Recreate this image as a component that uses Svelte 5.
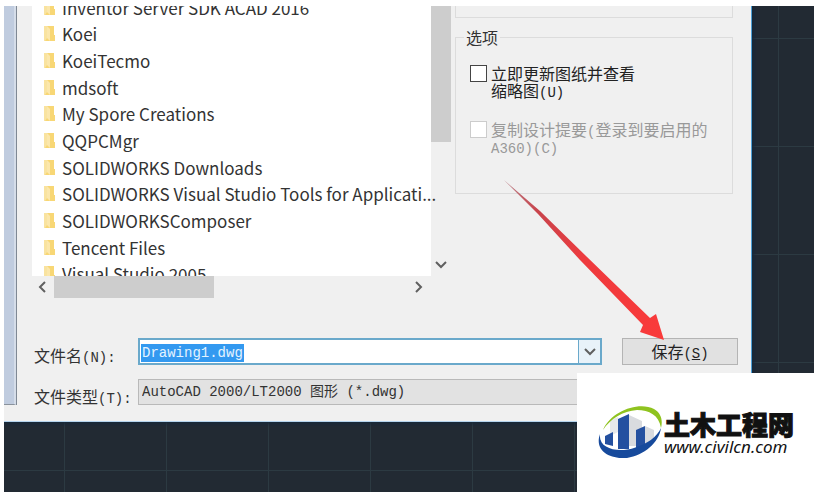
<script lang="ts">
    const folders = [
        'Inventor Server SDK ACAD 2016',
        'Koei',
        'KoeiTecmo',
        'mdsoft',
        'My Spore Creations',
        'QQPCMgr',
        'SOLIDWORKS Downloads',
        'SOLIDWORKS Visual Studio Tools for Applicati...',
        'SOLIDWORKSComposer',
        'Tencent Files',
        'Visual Studio 2005',
    ];

    let fileName = $state('Drawing1.dwg');
    let updateThumb = $state(false);
</script>

<div class="canvas">
    <div class="dialog">
        <div class="edge"></div>

        <div class="content">
            <div class="top">
                <div class="browser">
                    <div class="listRow">
                        <ul class="folders">
                            {#each folders as folder}
                                <li>
                                    <svg class="folder" viewBox="0 0 12 17" aria-hidden="true">
                                        <path d="M1 1h6v15H1z" fill="#f9e3a0" />
                                        <path d="M4 1h7v9h1v6H2l2-3z" fill="#f8d775" />
                                        <path d="M4 1v12l3 3V4z" fill="#fbe7ac" />
                                    </svg>
                                    <span>{folder}</span>
                                </li>
                            {/each}
                        </ul>
                        <div class="vbar">
                            <div class="vthumb"></div>
                            <button class="arrowBtn" aria-label="Scroll down">
                                <svg width="12" height="8" viewBox="0 0 12 8"><path d="M1 1l5 5 5-5" /></svg>
                            </button>
                        </div>
                    </div>
                    <div class="hbar">
                        <button class="arrowBtn" aria-label="Scroll left">
                            <svg width="8" height="12" viewBox="0 0 8 12"><path d="M7 1L2 6l5 5" /></svg>
                        </button>
                        <div class="track"><div class="hthumb"></div></div>
                        <button class="arrowBtn" aria-label="Scroll right">
                            <svg width="8" height="12" viewBox="0 0 8 12"><path d="M1 1l5 5-5 5" /></svg>
                        </button>
                    </div>
                </div>

                <div class="side">
                    <div class="groupEnd"></div>
                    <fieldset>
                        <legend>选项</legend>
                        <label class="check">
                            <input type="checkbox" bind:checked={updateThumb} />
                            <span>立即更新图纸并查看<br />缩略图<span class="latin">(U)</span></span>
                        </label>
                        <label class="check off">
                            <input type="checkbox" disabled />
                            <span>复制设计提要<span class="latin">(</span>登录到要启用的<br /><span class="latin">A360)(C)</span></span>
                        </label>
                    </fieldset>
                </div>
            </div>

            <div class="form">
                <label for="fileName">文件名<span class="latin">(N):</span></label>
                <div class="combo">
                    <div class="nameBox">
                        <input id="fileName" type="text" size="12" bind:value={fileName} />
                    </div>
                    <button aria-label="Recent names">
                        <svg width="12" height="8" viewBox="0 0 12 8"><path d="M1 1l5 5 5-5" /></svg>
                    </button>
                </div>
                <button class="save">保存<span class="latin">(<u>S</u>)</span></button>

                <label for="fileType">文件类型<span class="latin">(T):</span></label>
                <select id="fileType">
                    <option>AutoCAD 2000/LT2000 图形 (*.dwg)</option>
                </select>
            </div>
        </div>

        <svg class="pointer" width="162" height="162" viewBox="0 0 162 162" aria-hidden="true">
            <defs>
                <linearGradient id="red" x1="0" y1="0" x2="1" y2="1">
                    <stop offset="0" stop-color="#b98088" />
                    <stop offset="0.2" stop-color="#c8444c" />
                    <stop offset="0.5" stop-color="#ee3a3e" />
                    <stop offset="1" stop-color="#fa3a3a" />
                </linearGradient>
            </defs>
            <path d="M0 0L36 31 82 76 146 138 152 134 160 160 136 152 139 145 76 80 34 34z" fill="url(#red)" />
        </svg>
    </div>

    <div class="brand">
        <svg class="logo" width="64" height="54" viewBox="0 0 64 54" aria-hidden="true">
            <path d="M12 14l8-3v15l-8 4z" fill="#e6e8ea" />
            <path d="M31 9l13 6v25H31zM47 20l9 4v10l-9 5z" fill="#d9dbdf" />
            <path d="M7 30l8-4v14l-8-2z" fill="#2450a0" />
            <path d="M20 13l11-5v35H20z" fill="#2450a0" />
            <path d="M38 24l9-4v19l-9 3z" fill="#2450a0" />
            <path d="M5 24C13 5 41-5 56 3c7 4 9 11 7 19C61 9 51 4 39 4 25 5 12 13 5 24z" fill="#8fc31f" />
            <path d="M2 28C0 43 20 47 36 42 49 38 59 31 63 22 61 37 46 49 29 52 12 53-4 45 2 28z" fill="#174a9c" />
        </svg>
        <div class="brandText">
            <strong>土木工程网</strong>
            <span>www.civilcn.com</span>
        </div>
    </div>
</div>

<style>
    :global(body) {
        margin: 0;
        background: #fff;
    }

    .canvas {
        position: relative;
        margin: 6px 3px 0 4px;
        padding: 0 62px 70px 0;
        overflow: hidden;
        background-color: #222a33;
        background-image:
            linear-gradient(90deg, #2c3a42 1px, transparent 1px),
            linear-gradient(#2c3a42 1px, transparent 1px);
        background-size: 102px 108px;
        background-position: 60px 32px;
        font-family: "Noto Sans CJK SC", sans-serif;
        font-size: 16px;
        line-height: 17px;
        color: #333;
    }

    .dialog {
        position: relative;
        display: flex;
        box-sizing: border-box;
        padding-bottom: 16px;
        background: #f0f0f0;
        border-right: 1px solid #4d9fd6;
        border-bottom: 1px solid #b4d3ec;
        box-shadow: 0 0 4px 2px #16283a;
    }

    .edge {
        width: 10px;
        background: #c0ccdf;
        border-right: 2px solid #d5dde9;
        border-bottom: 1px solid #8a929c;
        box-shadow: 1px 0 #7f8894;
    }

    .content {
        flex: 1;
        min-width: 0;
        padding: 0 13px 0 16px;
    }

    .top {
        display: flex;
    }

    .browser {
        flex: 1;
        min-width: 0;
    }

    .listRow {
        display: flex;
        height: 270px;
        overflow: hidden;
    }

    .folders {
        flex: 1;
        min-width: 0;
        display: flex;
        flex-direction: column;
        height: 293px;
        margin: -12px 0 0;
        padding: 0 0 0 11px;
        list-style: none;
        background: #fff;
        font-size: 17px;
        white-space: nowrap;
    }

    .folders li {
        flex: 1;
        display: flex;
        align-items: center;
        gap: 7px;
    }

    .folder {
        flex: none;
        width: 12px;
        height: 17px;
    }

    .vbar {
        display: flex;
        flex-direction: column;
        justify-content: space-between;
        width: 20px;
    }

    .vthumb {
        height: 136px;
        background: #cdcdcd;
    }

    .arrowBtn {
        display: flex;
        align-items: center;
        justify-content: center;
        width: 20px;
        height: 22px;
        padding: 0;
        border: 0;
        background: none;
    }

    svg path {
        stroke-width: 2;
    }

    button svg path {
        fill: none;
        stroke: #606060;
    }

    .hbar {
        display: flex;
        margin-right: 22px;
        height: 22px;
    }

    .track {
        flex: 1;
        padding-left: 2px;
    }

    .hthumb {
        width: 45%;
        height: 22px;
        background: #cdcdcd;
    }

    .side {
        width: 278px;
        margin: 0 5px 0 4px;
    }

    .groupEnd {
        height: 11px;
        border: 1px solid #dcdcdc;
        border-top: 0;
    }

    fieldset {
        height: 165px;
        box-sizing: border-box;
        margin: 11px 0 0;
        padding: 19px 0 0 14px;
        border: 1px solid #dcdcdc;
    }

    legend {
        margin-left: -6px;
        padding: 0 2px;
    }

    .check {
        display: flex;
        align-items: flex-start;
        gap: 4px;
        margin-bottom: 22px;
        color: #222;
        white-space: nowrap;
    }

    .check input {
        appearance: none;
        width: 17px;
        height: 17px;
        margin: 0;
        border: 1px solid #444;
        background: #fff;
    }

    .off {
        color: #999;
    }

    .off input {
        border-color: #ccc;
    }

    .latin {
        font-family: "Liberation Mono", monospace;
        font-size: 14px;
        line-height: 12px;
    }

    .form {
        display: grid;
        grid-template-columns: 104px 1fr 116px;
        row-gap: 14px;
        align-items: center;
        margin-top: 40px;
        padding-left: 2px;
    }

    .form label {
        padding-top: 8px;
    }

    .combo {
        display: flex;
        box-sizing: border-box;
        height: 27px;
        margin-right: 20px;
        border: 2px solid #6aa9cb;
        background: #fff;
    }

    .nameBox {
        flex: 1;
        min-width: 0;
        padding: 2px 1px;
    }

    .nameBox input {
        width: 12ch;
        height: 18px;
        box-sizing: content-box;
        padding: 0 1px;
        border: 0;
        background: #3399f0;
        color: #e4f3ff;
        font-family: "Liberation Mono", monospace;
        font-size: 14px;
    }

    .combo button {
        width: 22px;
        padding: 0;
        border: 0;
        border-left: 1px solid #6aa9cb;
        background: #e8f2f9;
    }

    .save {
        height: 27px;
        padding: 0;
        border: 1px solid #b4b4b4;
        background: #e1e1e1;
        color: #222;
        font: inherit;
    }

    select {
        appearance: none;
        height: 26px;
        margin-right: 20px;
        padding: 0 3px;
        border: 1px solid #b9b9b9;
        border-radius: 0;
        background: #e2e2e2;
        color: #333;
        font-family: "Liberation Mono", "Noto Sans CJK SC", monospace;
        font-size: 14px;
    }

    .pointer {
        position: absolute;
        right: 85px;
        top: 174px;
    }

    .brand {
        position: absolute;
        right: 0;
        bottom: 0;
        display: flex;
        align-items: center;
        gap: 2px;
        box-sizing: border-box;
        width: 237px;
        height: 119px;
        padding-left: 21px;
        background: #fff;
        color: #111;
    }

    .brandText {
        display: flex;
        flex-direction: column;
        padding-top: 2px;
    }

    .brandText strong {
        font-size: 26px;
        font-weight: 900;
        line-height: 26px;
        -webkit-text-stroke: 1px #111;
    }

    .brandText span {
        font-family: "Noto Sans", sans-serif;
        font-size: 17px;
        font-style: italic;
        line-height: 20px;
    }
</style>
